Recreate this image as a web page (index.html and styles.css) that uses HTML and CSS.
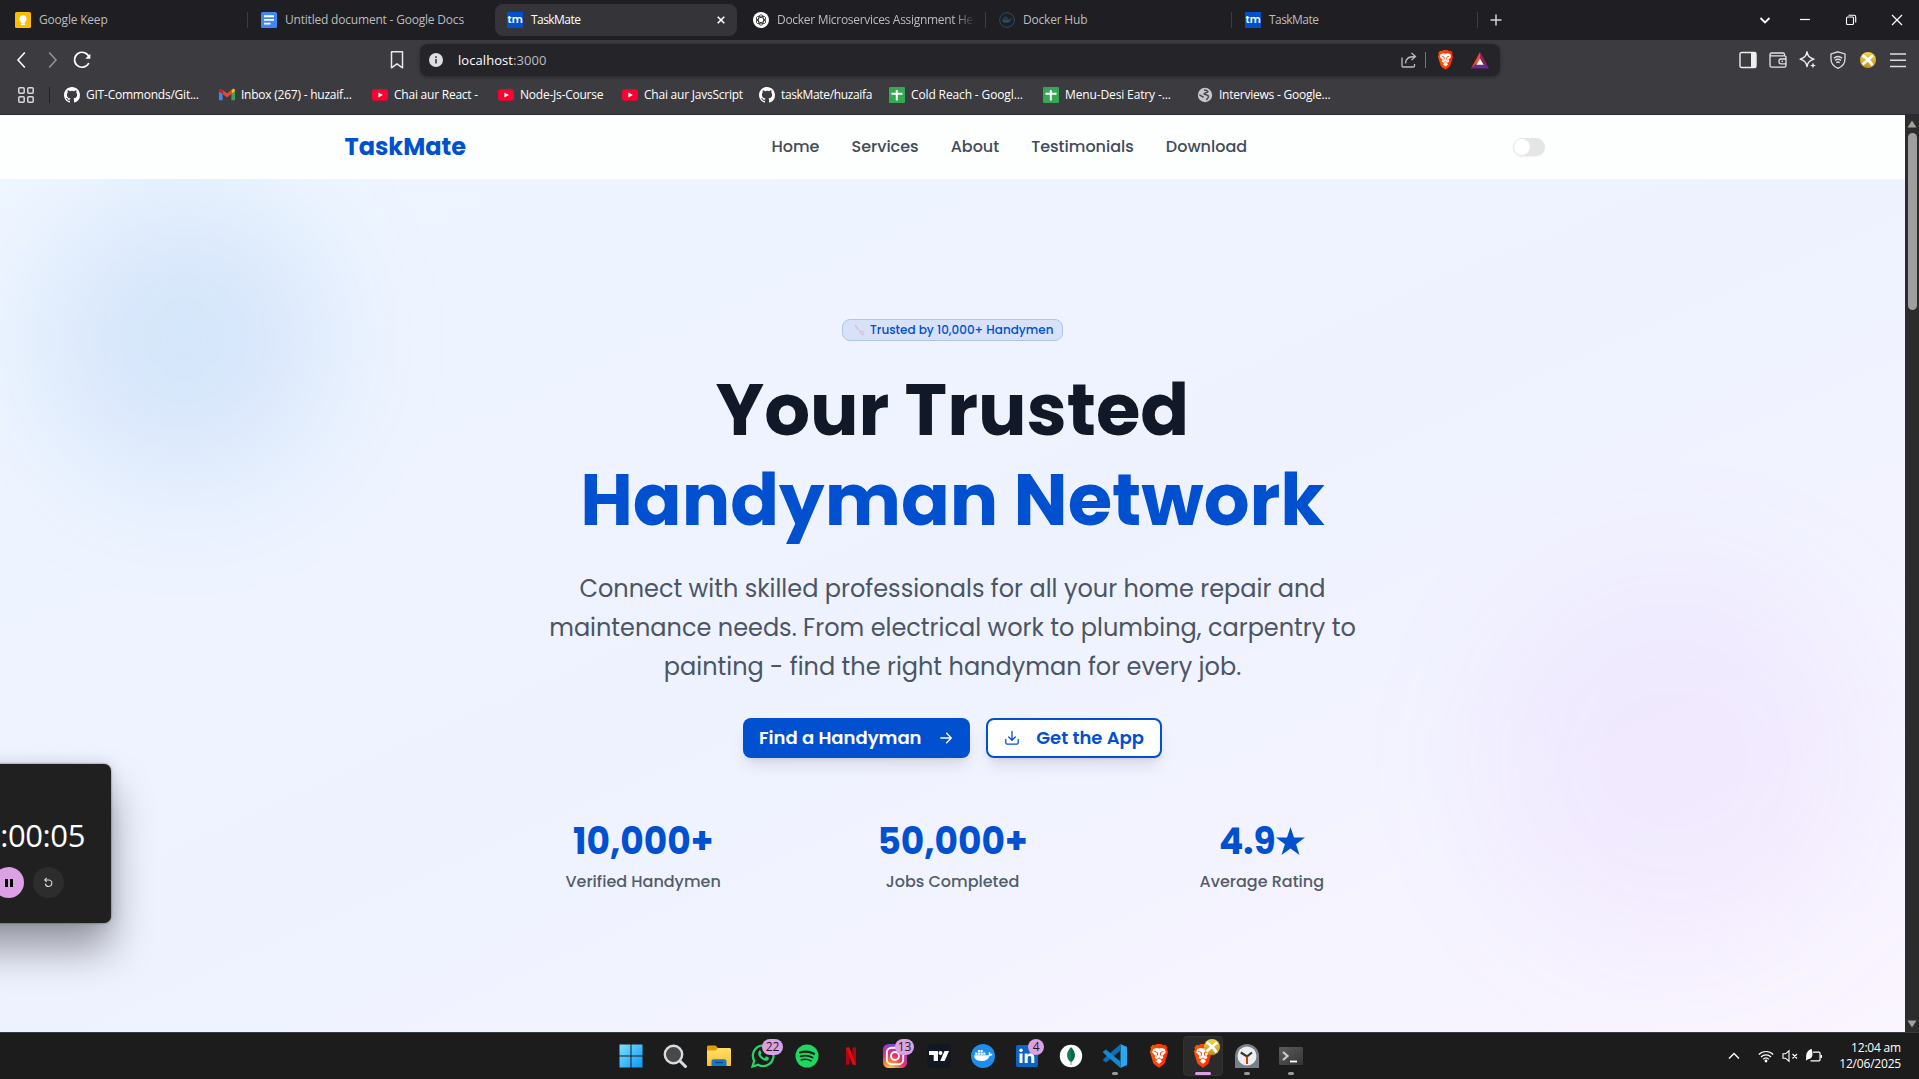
FILE: index.html
```html
<!DOCTYPE html>
<html lang="en">
<head>
<meta charset="utf-8">
<title>TaskMate</title>
<link rel="stylesheet" href="styles.css">
</head>
<body>
<svg class="defs" width="0" height="0" aria-hidden="true">
  <defs>
    <linearGradient id="g-brave" x1="0" y1="0" x2="1" y2="0"><stop offset="0" stop-color="#ff5500"/><stop offset="1" stop-color="#ff2a00"/></linearGradient>
    <linearGradient id="g-win" x1="0" y1="0" x2="1" y2="1"><stop offset="0" stop-color="#7fe0ff"/><stop offset="1" stop-color="#0a97f5"/></linearGradient>
    <linearGradient id="g-folder" x1="0" y1="0" x2="0" y2="1"><stop offset="0" stop-color="#ffdf6b"/><stop offset="1" stop-color="#fcc02e"/></linearGradient>
    <radialGradient id="g-insta" cx=".28" cy="1.05" r="1.1"><stop offset="0" stop-color="#ffd453"/><stop offset=".3" stop-color="#fb7e35"/><stop offset=".55" stop-color="#e4316b"/><stop offset=".8" stop-color="#b833b0"/><stop offset="1" stop-color="#5a55e0"/></radialGradient>
    <linearGradient id="g-term" x1="0" y1="0" x2="1" y2="1"><stop offset="0" stop-color="#5d5d5d"/><stop offset="1" stop-color="#343434"/></linearGradient>
    <linearGradient id="g-gold" x1="0" y1="0" x2="0" y2="1"><stop offset="0" stop-color="#f4d54b"/><stop offset="1" stop-color="#c09412"/></linearGradient>
    <symbol id="i-github" viewBox="0 0 16 16"><path fill="#fff" d="M8 0C3.58 0 0 3.58 0 8c0 3.54 2.29 6.53 5.47 7.59.4.07.55-.17.55-.38 0-.19-.01-.82-.01-1.49-2.01.37-2.53-.49-2.69-.94-.09-.23-.48-.94-.82-1.13-.28-.15-.68-.52-.01-.53.63-.01 1.08.58 1.23.82.72 1.21 1.87.87 2.33.66.07-.52.28-.87.51-1.07-1.78-.2-3.64-.89-3.64-3.95 0-.87.31-1.59.82-2.15-.08-.2-.36-1.02.08-2.12 0 0 .67-.21 2.2.82a7.6 7.6 0 0 1 4 0c1.53-1.04 2.2-.82 2.2-.82.44 1.1.16 1.92.08 2.12.51.56.82 1.27.82 2.15 0 3.07-1.87 3.75-3.65 3.95.29.25.54.73.54 1.48 0 1.07-.01 1.93-.01 2.2 0 .21.15.46.55.38A8 8 0 0 0 16 8c0-4.42-3.58-8-8-8z"/></symbol>
    <symbol id="i-youtube" viewBox="0 0 16 16"><rect y="2.3" width="16" height="11.4" rx="2.6" fill="#ff0033"/><path d="M6.4 5.5v5L10.8 8z" fill="#fff"/></symbol>
    <symbol id="i-sheets" viewBox="0 0 16 16"><rect width="16" height="16" rx="1" fill="#34a853"/><path d="M7.8 3v10.5M2.5 6.8h11" stroke="#fff" stroke-width="2"/></symbol>
    <symbol id="i-gmail" viewBox="0 0 16 16"><path d="M1 13.3h2.6V7L0 4.3v7.9c0 .6.4 1.1 1 1.1z" fill="#4285f4"/><path d="M12.4 13.3H15c.6 0 1-.5 1-1.1V4.3L12.4 7z" fill="#34a853"/><path d="M12.4 2.9V7L16 4.3V3.6c0-1.5-1.6-2.2-2.6-1.4z" fill="#fbbc04"/><path d="M3.6 7V2.9L8 6.2l4.4-3.3V7L8 10.4z" fill="#ea4335"/><path d="M0 3.6v.7L3.6 7V2.9l-1-.7C1.6 1.4 0 2.1 0 3.6z" fill="#c5221f"/></symbol>
    <symbol id="i-tm" viewBox="0 0 16 16"><rect width="16" height="16" fill="#0050d0"/><text x="8" y="11" text-anchor="middle" fill="#fff" font-family="Poppins, sans-serif" font-weight="600" font-size="10.5" textLength="15">tm</text></symbol>
    <symbol id="i-brave" viewBox="0 0 20 24"><path d="M18.600 3.400 16.300 .8l-2.200.4L12.500 0h-5L5.900 1.200 3.700.8 1.400 3.400 2 5 .9 7.800l3.200 10.600c.3 1 .9 1.800 1.800 2.400L10 23.700l4.100-2.900c.9-.6 1.500-1.400 1.800-2.400l3.200-10.600L18 5z" fill="url(#g-brave)"/><path d="M10 4.400 7.300 3.900 4.100 5 3.300 8.500l3.200 3.300-1 2.200 3.200 1.500-1.900 1.700L10 19.800l3.200-2.600-1.900-1.700 3.200-1.500-1-2.200 3.200-3.300L15.900 5l-3.200-1.100z" fill="#fff"/><path d="M5.300 7.300 8.300 8.400l.3 2.800-1.200.8M14.700 7.300l-3 1.100-.3 2.800 1.200.8M8.500 14.800l1.500-.8 1.500.8" fill="none" stroke="#fb4a0a" stroke-width="1"/></symbol>
    <symbol id="i-ball" viewBox="0 0 16 16"><circle cx="8" cy="8" r="8" fill="url(#g-gold)"/><path d="M2.500 3.500C7 6 10 9 12.500 13.500M13 3.500 2.500 12.500" stroke="#fff" stroke-width="2.800" fill="none"/></symbol>
    <symbol id="i-whale" viewBox="0 0 24 24"><path d="M4 12.300h14.500c.4-.9.300-1.800-.2-2.700l.8-.6c.7.500 1 1 1.200 1.800.8-.1 1.500 0 2 .4-.5 1-1.400 1.500-2.700 1.500C18.300 16.300 15.500 18 11.500 18 6.500 18 4 16 4 12.300z" fill="currentColor"/><path d="M5 9.500h2.200v2.200H5zM7.700 9.500h2.200v2.200H7.700zM10.400 9.500h2.200v2.200h-2.200zM13.100 9.500h2.200v2.200h-2.200zM7.700 7h2.200v2.100H7.700zM10.400 7h2.200v2.100h-2.200z" fill="currentColor"/></symbol>
  </defs>
</svg>

<div class="desktop">
  <header class="tabstrip">
    <div class="tab">
      <svg class="ico" viewBox="0 0 16 16"><rect width="16" height="16" rx="1.500" fill="#fbbc04"/><circle cx="8" cy="6.800" r="3.600" fill="#fff"/><path d="M6 9h4v2H6zM6 11.600h4v1.400H6z" fill="#fff"/></svg>
      <span>Google Keep</span>
    </div>
    <div class="tab plain">
      <svg class="ico" viewBox="0 0 16 16"><rect width="16" height="16" rx="1.500" fill="#4285f4"/><path d="M3 4.200h10M3 7.900h10M3 11.600h6.500" stroke="#fff" stroke-width="1.900"/></svg>
      <span>Untitled document - Google Docs</span>
    </div>
    <div class="tab active">
      <svg class="ico"><use href="#i-tm"/></svg>
      <span>TaskMate</span>
      <svg class="close" viewBox="0 0 8 8"><path d="M.7.7l6.600 6.600M7.300.7.7 7.300" stroke="#fff" stroke-width="1.600"/></svg>
    </div>
    <div class="tab">
      <svg class="ico" viewBox="0 0 16 16"><circle cx="8" cy="8" r="8" fill="#fff"/><g fill="none" stroke="#222" stroke-width=".8"><ellipse cx="8" cy="8" rx="2.600" ry="5.200"/><ellipse cx="8" cy="8" rx="2.600" ry="5.200" transform="rotate(60 8 8)"/><ellipse cx="8" cy="8" rx="2.600" ry="5.200" transform="rotate(120 8 8)"/></g></svg>
      <span class="faded">Docker Microservices Assignment Hel</span>
    </div>
    <div class="tab">
      <svg class="ico hub" viewBox="0 0 24 24"><circle cx="12" cy="12" r="11" fill="none" stroke="currentColor" stroke-width="1.500"/><g transform="translate(1.500 1.500) scale(.82)"><use href="#i-whale" width="24" height="24"/></g></svg>
      <span>Docker Hub</span>
    </div>
    <div class="tab last">
      <svg class="ico"><use href="#i-tm"/></svg>
      <span>TaskMate</span>
    </div>
    <svg class="newtab" viewBox="0 0 12 12"><path d="M6 .5v11M.5 6h11" stroke="#d5d5d8" stroke-width="1.500"/></svg>
    <div class="winctl">
      <svg viewBox="0 0 12 12"><path d="M1.500 4 6 8.500 10.500 4" fill="none" stroke="#fff" stroke-width="1.800"/></svg>
      <svg viewBox="0 0 12 12"><path d="M1 5.500h10" stroke="#fff" stroke-width="1.200"/></svg>
      <svg viewBox="0 0 12 12"><g fill="none" stroke="#fff" stroke-width="1.100"><rect x="1.500" y="3" width="7" height="7.500" rx="1"/><path d="M3.500 1.200h5.500c1 0 1.700.6 1.700 1.700v5.600"/></g></svg>
      <svg viewBox="0 0 12 12"><path d="M1 1l10 10M11 1 1 11" stroke="#fff" stroke-width="1.200"/></svg>
    </div>
  </header>

  <div class="toolbar">
    <svg class="nav-ico" viewBox="0 0 20 20"><path d="M12.800 2.500 6 10l6.800 7.500" fill="none" stroke="#fff" stroke-width="1.500"/></svg>
    <svg class="nav-ico dim" viewBox="0 0 20 20"><path d="M7.200 2.500 14 10l-6.800 7.500" fill="none" stroke="#fff" stroke-width="1.500"/></svg>
    <svg class="nav-ico" viewBox="0 0 20 20"><path d="M17.200 7.500A7.500 7.500 0 1 0 16.800 13" fill="none" stroke="#fff" stroke-width="1.600"/><path d="M18.300 3.800v5h-5z" fill="#fff"/></svg>
    <svg class="nav-ico mark" viewBox="0 0 20 20"><path d="M4.500 1.800h11v16l-5.500-4-5.500 4z" fill="none" stroke="#e8e8ea" stroke-width="1.500" stroke-linejoin="round"/></svg>
    <div class="urlbar">
      <svg class="info" viewBox="0 0 14 14"><circle cx="7" cy="7" r="7" fill="#dedee3"/><path d="M7 6v4.500M7 3.200v1.700" stroke="#3a393e" stroke-width="1.600"/></svg>
      <span class="url">localhost<i>:3000</i></span>
      <svg class="share" viewBox="0 0 16 16"><g fill="none" stroke="#bcbcc0" stroke-width="1.300"><path d="M1 5.500v8.500c0 .6.400 1 1 1h10.500c.6 0 1-.4 1-1v-2"/><path d="M4.500 11.500c0-4.500 2.500-7 9.500-7M10.500 1l4 3.500-4 3.500"/></g></svg>
      <b class="rule"></b>
      <svg class="shield"><use href="#i-brave"/></svg>
      <svg class="bat" viewBox="0 0 18 17"><path d="M9 0 0 16.500 9 10.500z" fill="#ff4724"/><path d="M9 0v6.500L18 16.500z" fill="#9e1f63"/><path d="M0 16.500h18l-5-5H5z" fill="#662d91"/><path d="M9 6.500 5.300 12.800h7.400z" fill="#fff"/></svg>
    </div>
    <div class="actions">
      <svg viewBox="0 0 18 18"><rect x="1" y="1.500" width="16" height="15" rx="1.500" fill="none" stroke="#eee" stroke-width="1.400"/><path d="M12 1.500h5v15h-5z" fill="#eee"/></svg>
      <svg viewBox="0 0 18 18"><g fill="none" stroke="#e4e4e6" stroke-width="1.300"><path d="M1 3.500v11c0 1 .7 1.700 1.700 1.700h12.600c1 0 1.700-.7 1.700-1.700V6.500c0-1-.7-1.700-1.700-1.700H2.300C1.300 4.800 1 4.200 1 3.500c0-.8.600-1.500 1.500-1.500h11.500c1 0 1.500.6 1.500 1.500v1.300"/><path d="M17 8h-5.200c-1 0-1.800.8-1.800 1.800v1.200c0 1 .8 1.800 1.800 1.800H17M12.500 10.400h1.500"/></g></svg>
      <svg viewBox="0 0 18 18"><path d="M8 .8c.8 4.300 2.200 5.900 6.900 7.400-4.700 1.500-6.100 3.100-6.900 7.400-.8-4.300-2.200-5.900-6.900-7.400C5.800 6.700 7.200 5.100 8 .8z" fill="none" stroke="#eee" stroke-width="1.400" stroke-linejoin="round"/><path d="M14 11.500l.8 2.200 2.200.8-2.200.8-.8 2.200-.8-2.200-2.200-.8 2.200-.8z" fill="#eee"/></svg>
      <svg viewBox="0 0 18 18"><path d="M9 .8 16 3v5c0 5-3 7.700-7 9.300C5 15.700 2 13 2 8V3z" fill="none" stroke="#ddd" stroke-width="1.300"/><path d="M4.800 7.200c2.500-2 5.900-2 8.400 0M6 9.500c1.800-1.500 4.200-1.500 6 0M7.300 11.700c1-.8 2.400-.8 3.400 0" fill="none" stroke="#ddd" stroke-width="1.300"/></svg>
      <svg viewBox="-1 -1 18 18"><use href="#i-ball" width="16" height="16"/></svg>
      <svg viewBox="0 0 18 18"><path d="M1 3h16M1 9.200h16M1 15.400h16" stroke="#ddd" stroke-width="1.500"/></svg>
    </div>
  </div>

  <div class="bookmarks">
    <svg class="grid-ico" viewBox="0 0 16 16"><g fill="none" stroke="#d8d8da" stroke-width="1.500"><rect x=".8" y=".8" width="5.400" height="5.400" rx="1"/><rect x="9.800" y=".8" width="5.400" height="5.400" rx="1"/><rect x=".8" y="9.800" width="5.400" height="5.400" rx="1"/><rect x="9.800" y="9.800" width="5.400" height="5.400" rx="1"/></g></svg>
    <b class="rule"></b>
    <div class="bm w155"><svg class="ico"><use href="#i-github"/></svg><span>GIT-Commonds/Git...</span></div>
    <div class="bm w153"><svg class="ico"><use href="#i-gmail"/></svg><span>Inbox (267) - huzaif...</span></div>
    <div class="bm w126"><svg class="ico"><use href="#i-youtube"/></svg><span>Chai aur React -</span></div>
    <div class="bm w124"><svg class="ico"><use href="#i-youtube"/></svg><span>Node-Js-Course</span></div>
    <div class="bm w137"><svg class="ico"><use href="#i-youtube"/></svg><span>Chai aur JavsScript</span></div>
    <div class="bm w130"><svg class="ico"><use href="#i-github"/></svg><span>taskMate/huzaifa</span></div>
    <div class="bm w154"><svg class="ico"><use href="#i-sheets"/></svg><span>Cold Reach - Googl...</span></div>
    <div class="bm w154"><svg class="ico"><use href="#i-sheets"/></svg><span>Menu-Desi Eatry -...</span></div>
    <div class="bm"><svg class="ico" viewBox="0 0 16 16"><circle cx="8" cy="8" r="7.200" fill="#c6c7ca"/><path d="M7 3c2.500 0 3.500.5 4 1.500-1 1.500-3.500 1-4 2.500 1.500 1 4 .4 4.500 2.200.2 1.800-1.500 2.600-2 3.800M2.500 7.500c1 2 3.500 1.500 4 3" fill="none" stroke="#4a4a50" stroke-width="1.500"/></svg><span>Interviews - Google...</span></div>
  </div>

  <div class="viewport">
    <div class="page">
      <nav class="site-nav">
        <span class="logo">TaskMate</span>
        <div class="links"><a>Home</a><a>Services</a><a>About</a><a>Testimonials</a><a>Download</a></div>
        <span class="toggle"><i></i></span>
      </nav>
      <section class="hero">
        <div class="blob blue"></div>
        <div class="blob purple"></div>
        <div class="hero-body">
          <div class="badge"><svg viewBox="0 0 12 12"><path d="M1 .8 2.800 3.400 4 3M2.800 3.400 8 8.600" fill="none" stroke="#e0bdd2" stroke-width="1.500"/><circle cx="9.200" cy="9.600" r="1.700" fill="none" stroke="#e0bdd2" stroke-width="1.300"/></svg><span>Trusted by 10,000+ Handymen</span></div>
          <h1><span>Your Trusted</span><span class="accent">Handyman Network</span></h1>
          <p class="lead">Connect with skilled professionals for all your home repair and<br>maintenance needs. From electrical work to plumbing, carpentry to<br>painting - find the right handyman for every job.</p>
          <div class="cta">
            <a class="btn primary">Find a Handyman<svg viewBox="0 0 16 16"><path d="M2.800 8h10.400M8.600 3.300 13.300 8l-4.700 4.700" fill="none" stroke="currentColor" stroke-width="1.300" stroke-linecap="round" stroke-linejoin="round"/></svg></a>
            <a class="btn outline"><svg viewBox="0 0 16 16"><path d="M8 1.500V10M4.700 7 8 10.200 11.300 7M1.800 9.500v3.200c0 .8.600 1.500 1.500 1.500h9.400c.9 0 1.500-.7 1.500-1.500V9.500" fill="none" stroke="currentColor" stroke-width="1.300" stroke-linecap="round" stroke-linejoin="round"/></svg>Get the App</a>
          </div>
          <div class="stats">
            <div><strong>10,000+</strong><span>Verified Handymen</span></div>
            <div><strong>50,000+</strong><span>Jobs Completed</span></div>
            <div><strong>4.9<svg class="star" viewBox="0 0 29 28"><path d="M14.500 0 18 10.600h11l-8.900 6.600L23.500 28l-9-6.600-9 6.600 3.400-10.800L0 10.600h11z" fill="currentColor"/></svg></strong><span>Average Rating</span></div>
          </div>
        </div>
      </section>
    </div>
    <div class="scrollbar">
      <svg viewBox="0 0 10 8"><path d="M5 .5 9.500 7.500h-9z" fill="#a0a0a0"/></svg>
      <i></i>
      <svg viewBox="0 0 10 8"><path d="M5 7.500 9.500.5h-9z" fill="#a0a0a0"/></svg>
    </div>
  </div>

  <footer class="taskbar">
    <div class="apps">
      <div class="app"><svg viewBox="0 0 24 24"><path d="M.5.5h11v11H.5zM12.500.5h11v11h-11zM.5 12.500h11v11H.5zM12.500 12.500h11v11h-11z" fill="url(#g-win)"/></svg></div>
      <div class="app"><svg viewBox="0 0 24 24"><circle cx="10.500" cy="10.500" r="8.700" fill="#47494b" stroke="#d9dcde" stroke-width="2.400"/><path d="M17 17l5.500 5.500" stroke="#d9dcde" stroke-width="3" stroke-linecap="round"/></svg></div>
      <div class="app"><svg viewBox="0 0 24 24"><path d="M0 3c0-.8.700-1.500 1.500-1.500h7L11 4v4H0z" fill="#e0a100"/><path d="M0 6.500h8.500L11 4h11.500c.8 0 1.500.7 1.500 1.500V21c0 .6-.4 1-1 1H1c-.6 0-1-.4-1-1z" fill="url(#g-folder)"/><path d="M4.500 22v-4.500c0-1.400.900-2.300 2.300-2.300h10.400c1.400 0 2.300.9 2.300 2.300V22z" fill="#1479cc"/><path d="M8 18.500h8" stroke="#0a4d8c" stroke-width="1.500"/></svg></div>
      <div class="app"><svg viewBox="0 0 24 24"><path d="M1.500 22.500l1.700-5.800a10.300 10.300 0 1 1 4 4z" fill="none" stroke="#25d366" stroke-width="2.300"/><path d="M8.300 6.600c.5-.5 1-.4 1.300.2l.8 1.900c.2.500-.1.900-.9 1.800.9 1.800 2.200 3 4.100 3.800l1.200-1.500c.4-.4.800-.4 2.800.8.500.3.300 2-.7 2.700-1.700 1.200-4.500.4-7.200-2.100C6.900 11.600 6.500 8.600 8.300 6.600z" fill="#25d366"/></svg><em>22</em></div>
      <div class="app"><svg viewBox="0 0 24 24"><circle cx="12" cy="12" r="11.500" fill="#1ed760"/><g fill="none" stroke="#14231a" stroke-linecap="round"><path d="M5 8.500c4.800-1.400 10-.9 14 1.300" stroke-width="2.200"/><path d="M5.700 12.300c4.200-1.200 8.400-.7 11.800 1.200" stroke-width="1.900"/><path d="M6.300 15.800c3.600-1 6.800-.6 9.800 1" stroke-width="1.500"/></g></svg></div>
      <div class="app"><svg viewBox="0 0 24 24"><path d="M7 3.500h3.500v17L7 21zM13.500 3.500H17V21l-3.500-.5z" fill="#b1060f"/><path d="M7 3.500h3.500L17 21l-3.500-.5z" fill="#e50914"/></svg></div>
      <div class="app"><svg viewBox="0 0 24 24"><rect width="24" height="24" rx="5.500" fill="url(#g-insta)"/><g fill="none" stroke="#fff" stroke-width="1.900"><rect x="3.800" y="3.800" width="16.400" height="16.400" rx="4.800"/><circle cx="12" cy="12" r="4"/></g><circle cx="16.800" cy="7.300" r="1.200" fill="#fff"/></svg><em>13</em></div>
      <div class="app"><svg viewBox="0 0 24 24"><rect width="24" height="24" rx="4" fill="#131722"/><path d="M2 7h9v10H6.700v-6H2zM17.500 7H22l-4.300 10h-4.500zM13.500 7a2 2 0 1 1 0 4 2 2 0 0 1 0-4z" fill="#fff"/></svg></div>
      <div class="app"><svg class="whale" viewBox="0 0 24 24"><circle cx="12" cy="12" r="12" fill="#1d8eed"/><g transform="translate(-.8 -1)"><use href="#i-whale" width="24" height="24"/></g></svg></div>
      <div class="app"><svg viewBox="0 0 24 24"><rect x="1" y="1" width="22" height="22" rx="2" fill="#0a66c2"/><path d="M4.500 9.500h3V19h-3zM9.700 9.500h2.900v1.400c1.500-2.600 6.700-2.300 6.700 2.300V19h-3v-5c0-2.600-3.600-2.500-3.600 0v5h-3z" fill="#fff"/><circle cx="6" cy="6.300" r="1.700" fill="#fff"/></svg><em class="round">4</em></div>
      <div class="app"><svg viewBox="0 0 24 24"><circle cx="12" cy="12" r="11.200" fill="#fff"/><path d="M12 3c5 5 5.500 11 0 15.500z" fill="#00684a"/><path d="M12 3c-5 5-5.500 11 0 15.500z" fill="#127c56"/><path d="M12 17v4" stroke="#8a9a92"/></svg></div>
      <div class="app run"><svg viewBox="0 0 24 24"><path d="M17.500 0 24 3v18l-6.500 3z" fill="#29a7f0"/><path d="M17.500 0v6.500L3 18.500.5 16.700c-.6-.5-.6-1.200 0-1.700z" fill="#0a70b8"/><path d="M17.500 24v-6.500L3 5.500.5 7.300c-.6.5-.6 1.200 0 1.700z" fill="#1488d0"/></svg></div>
      <div class="app"><svg class="lion"><use href="#i-brave"/></svg></div>
      <div class="app on"><svg class="lion"><use href="#i-brave"/></svg><svg class="ball"><use href="#i-ball"/></svg></div>
      <div class="app run"><svg viewBox="0 0 24 24"><path d="M12 0a12 12 0 0 1 12 12v12H0V12A12 12 0 0 1 12 0z" fill="#75808a"/><circle cx="12" cy="12" r="9.500" fill="#eceeef"/><path d="M5.800 8.500 12 12.500l5-4" fill="none" stroke="#333" stroke-width="2.200"/><path d="M12 12.500V20" stroke="#d83b01" stroke-width="2"/></svg></div>
      <div class="app run"><svg viewBox="0 0 24 24"><rect y="3" width="24" height="18" rx="1" fill="url(#g-term)"/><path d="M4 8l4.500 4L4 16" fill="none" stroke="#ccc" stroke-width="2.200"/><path d="M11 17.500h7" stroke="#fff" stroke-width="1.800"/></svg></div>
    </div>
    <div class="tray">
      <svg viewBox="0 0 16 16"><path d="M3 10.500 8 5.500l5 5" fill="none" stroke="#fff" stroke-width="1.400"/></svg>
      <svg viewBox="0 0 16 16"><g fill="none" stroke="#fff" stroke-width="1.200"><path d="M.8 6.500c4-4 10.400-4 14.400 0M3 9c2.800-2.800 7.200-2.800 10 0M5.200 11.300c1.600-1.500 4-1.500 5.600 0"/></g><circle cx="8" cy="13" r="1.400" fill="#fff"/></svg>
      <svg viewBox="0 0 16 16"><path d="M1 5.800h2.500L7 2.800v10.400l-3.500-3H1zM10.500 6l4.500 4.500M15 6l-4.500 4.500" fill="none" stroke="#fff" stroke-width="1.100"/></svg>
      <svg viewBox="0 0 16 16"><path d="M7 4.200h6c.6 0 1 .4 1 1v6.600c0 .6-.4 1-1 1H4.500M15.400 7v3" fill="none" stroke="#fff" stroke-width="1.200"/><path d="M5.500.8C1.500 2.500-.3 5.500.2 9.500c0 1-.5 2.500 0 3L2 11.300c4.500 0 5.500-5 3.500-10.500z" fill="#fff"/></svg>
      <div class="clock"><span>12:04 am</span><span>12/06/2025</span></div>
    </div>
  </footer>

  <aside class="timer">
    <div class="time">0:00:05</div>
    <div class="btns">
      <i class="pause"><svg viewBox="0 0 16 16"><path d="M5.500 4v8M10.500 4v8" stroke="#000" stroke-width="3"/></svg></i>
      <i class="reset"><svg viewBox="0 0 12 12"><path d="M2 3.200h4.500a3.600 3.600 0 1 1-4 4M4 1 1.800 3.200 4 5.400" fill="none" stroke="#ddd" stroke-width="1.100"/></svg></i>
    </div>
  </aside>
</div>
</body>
</html>
```
FILE: styles.css
```css
* { box-sizing: border-box; }
body { margin: 0; background: #1c1c1c; overflow: hidden; }
svg { display: block; flex: none; }
.defs { position: absolute; }
i, em { font-style: normal; }

.desktop {
  position: relative;
  width: 1919px;
  height: 1079px;
  display: flex;
  flex-direction: column;
  overflow: hidden;
  font: 12px/16px "Segoe UI", "Open Sans", sans-serif;
  letter-spacing: -0.2px;
  color: #fff;
}
.ico { width: 16px; height: 16px; }

/* tab strip */
.tabstrip { height: 40px; background: #1f1e23; display: flex; align-items: center; padding-left: 1px; }
.tab {
  position: relative;
  width: 246px;
  height: 32px;
  flex: none;
  display: flex;
  align-items: center;
  gap: 8px;
  padding: 0 10px 0 14px;
  color: #bcbcbf;
  white-space: nowrap;
}
.tab::after { content: ""; position: absolute; right: -1px; top: 8px; width: 1px; height: 16px; background: #3d3c42; }
.tab.plain::after, .tab.active::after { display: none; }
.tab.active { width: 242px; margin: 0 2px; padding-left: 12px; background: #353439; border-radius: 8px; color: #fff; }
.tab.active span, .tab.last span { letter-spacing: -0.55px; }
.tab .close { width: 8px; height: 8px; margin-left: auto; margin-right: 2px; }
.faded { overflow: hidden; width: 199px; letter-spacing: -0.3px; mask-image: linear-gradient(90deg, #000 90%, transparent); }
.hub { color: #2a4d66; }
.newtab { width: 12px; height: 12px; margin-left: 13px; }
.winctl { margin-left: auto; display: flex; align-items: center; padding-right: 16px; }
.winctl svg { width: 12px; height: 12px; margin-left: 34px; }
.winctl svg:nth-child(2) { margin-left: 28px; }

/* toolbar */
.toolbar { height: 40px; background: #3c3b40; display: flex; align-items: center; padding: 4px 12px; }
.nav-ico { width: 20px; height: 20px; }
.nav-ico + .nav-ico { margin-left: 10px; }
.nav-ico.dim { opacity: .45; }
.toolbar .mark { margin-left: 295px; width: 20px; }
.urlbar {
  width: 1080px;
  height: 32px;
  margin-left: 13px;
  display: flex;
  align-items: center;
  padding: 0 11px 0 9px;
  background: #252429;
  border-radius: 8px;
  box-shadow: 0 1px 4px rgba(0, 0, 0, .35);
}
.info { width: 14px; height: 14px; }
.url { margin-left: 15px; font-size: 13px; letter-spacing: 0.06px; }
.url i { color: #bdbdc0; }
.share { width: 16px; height: 16px; margin-left: auto; }
.rule { width: 1px; height: 16px; }
.urlbar .rule { margin: 0 11px 0 8px; background: #77767c; }
.shield { width: 17px; height: 20px; }
.bat { width: 18px; height: 17px; margin-left: 17px; }
.actions { display: flex; gap: 12px; margin-left: auto; }
.actions svg { width: 18px; height: 18px; }

/* bookmarks */
.bookmarks { height: 35px; background: #3c3b40; border-bottom: 1px solid #2b2a2e; display: flex; align-items: center; padding: 0 18px 4px; }
.grid-ico { width: 16px; height: 16px; }
.bookmarks .rule { margin: 0 14px 0 15px; background: #232227; }
.bm { display: flex; align-items: center; gap: 6px; white-space: nowrap; flex: none; letter-spacing: -0.23px; }
.w155 { width: 155px; }
.w153 { width: 153px; }
.w126 { width: 126px; }
.w124 { width: 124px; }
.w137 { width: 137px; }
.w130 { width: 130px; letter-spacing: -0.35px; }
.w154 { width: 154px; letter-spacing: -0.13px; }

/* page */
.viewport { height: 917px; display: flex; }
.page { width: 1905px; display: flex; flex-direction: column; font-family: Poppins, Inter, sans-serif; letter-spacing: 0; }
.site-nav { height: 64px; background: #fdfefe; display: flex; align-items: center; padding: 0 360px 0 344.500px; }
.logo { width: 427px; font-size: 24px; line-height: 32px; font-weight: 700; color: #0050d0; }
.links { display: flex; gap: 32px; font-size: 16px; line-height: 24px; font-weight: 500; color: #414b5a; }
.toggle { width: 32px; height: 18px; margin-left: auto; border-radius: 9px; background: #e5e5e5; padding: 1px; box-shadow: 0 1px 2px rgba(0, 0, 0, .06); }
.toggle i { display: block; width: 16px; height: 16px; border-radius: 50%; background: #fff; }

.hero {
  position: relative;
  flex: 1;
  overflow: hidden;
  background: linear-gradient(to bottom right, #eff6ff 0%, #eef2ff 50%, #faf5ff 100%);
  padding-top: 140px;
}
.blob { position: absolute; border-radius: 50%; filter: blur(64px); }
.blob.blue { left: 40px; top: 16px; width: 288px; height: 288px; background: rgba(0, 100, 210, .105); }
.blob.purple { right: 40px; top: 388px; width: 384px; height: 384px; background: rgba(192, 90, 247, .062); }
.hero-body { position: relative; display: flex; flex-direction: column; align-items: center; text-align: center; }
.badge {
  height: 22px;
  width: 221px;
  display: flex;
  align-items: center;
  gap: 5px;
  padding-left: 11px;
  border: 1px solid #abc6f1;
  border-radius: 8px;
  background: #d7e2f9;
  color: #0050d0;
  font-size: 12px;
  font-weight: 500;
  white-space: nowrap;
}
.badge svg { width: 11px; height: 12px; }
h1 { margin: 24px 0; font-size: 72px; line-height: 90px; font-weight: 700; color: #111827; }
h1 span { display: block; }
h1 .accent { color: #0050d0; }
.lead { margin: 0 0 32px; font-size: 24px; line-height: 39px; color: #4b5563; white-space: nowrap; }
.cta { display: flex; gap: 16px; }
.btn {
  height: 40px;
  display: flex;
  align-items: center;
  border-radius: 8px;
  font-size: 18px;
  font-weight: 600;
  white-space: nowrap;
  box-shadow: 0 10px 15px -3px rgba(0, 0, 0, .1), 0 4px 6px -4px rgba(0, 0, 0, .1);
}
.btn svg { width: 16px; height: 16px; }
.primary { width: 227px; padding: 0 16px; justify-content: space-between; background: #0050d0; color: #fff; }
.outline { width: 176px; padding: 0 16px; justify-content: space-between; background: #fff; border: 2px solid #0050d0; color: #0050d0; }
.stats { margin-top: 64px; width: 896px; display: grid; grid-template-columns: repeat(3, 1fr); gap: 32px; }
.stats div { display: flex; flex-direction: column; align-items: center; gap: 8px; }
.stats strong { display: flex; align-items: center; font-size: 36px; line-height: 40px; font-weight: 700; color: #0050d0; }
.stats span { font-size: 16px; line-height: 24px; font-weight: 500; color: #535d6a; }
.star { width: 29px; height: 28px; margin-bottom: 2px; }

.scrollbar { width: 14px; background: #2c2c2c; display: flex; flex-direction: column; align-items: center; padding: 5px 0 4px; }
.scrollbar svg { width: 10px; height: 8px; }
.scrollbar i { width: 9px; height: 177px; margin: 5px 0 auto; border-radius: 5px; background: #9f9f9f; }

/* taskbar */
.taskbar { height: 47px; background: #1c1c1c; border-top: 1px solid #3c3c3c; display: flex; padding-left: 611px; }
.apps { display: flex; gap: 4px; padding-top: 3px; }
.app { position: relative; width: 40px; height: 40px; display: flex; align-items: center; justify-content: center; border-radius: 4px; }
.app > svg { width: 24px; height: 24px; }
.app em {
  position: absolute;
  left: 19px;
  top: 3px;
  width: 21px;
  height: 16px;
  border-radius: 8px;
  background: #dca0e4;
  color: #1c1c1c;
  text-align: center;
  line-height: 16px;
}
.app:nth-child(7) em { left: 20px; width: 19px; }
.app em.round { left: 21px; width: 16px; }
.app.run::after, .app.on::after { content: ""; position: absolute; left: 17px; bottom: 1px; width: 6px; height: 3px; border-radius: 2px; background: #9a9a9a; }
.app.on { background: #2b2b2b; border: 1px solid #333; }
.app.on::after { left: 11px; bottom: 0; width: 16px; background: #dca0e4; }
.app .lion { width: 20px; height: 24px; }
.whale { color: #fff; }
.app .ball { position: absolute; left: 20px; top: 2px; width: 16px; height: 16px; }
.tray { margin-left: auto; display: flex; align-items: center; padding-right: 18px; }
.tray svg { width: 16px; height: 16px; margin-right: 8px; }
.tray svg:first-child { margin-right: 16px; }
.clock { width: 71px; display: flex; flex-direction: column; align-items: flex-end; letter-spacing: -0.2px; padding-bottom: 1px; }

/* floating stopwatch, partly off the left screen edge */
.timer {
  position: absolute;
  left: -120px;
  top: 764px;
  width: 231px;
  height: 159px;
  padding: 51px 26px 0 0;
  border-radius: 0 7px 7px 0;
  background: #202020;
  box-shadow: 0 0 2px rgba(0, 0, 0, .6), 0 0 14px rgba(0, 0, 0, .12), 0 26px 42px rgba(0, 0, 0, .38);
}
.time { text-align: right; font-size: 31px; font-weight: 500; line-height: 40px; letter-spacing: -0.4px; }
.btns { display: flex; justify-content: flex-end; gap: 9px; margin-top: 12px; padding-right: 21px; }
.btns i { width: 31px; height: 31px; border-radius: 50%; display: flex; align-items: center; justify-content: center; }
.pause { background: #dca0e4; }
.pause svg { width: 16px; height: 16px; }
.reset { background: #2d2d2d; }
.reset svg { width: 11px; height: 11px; }
```
